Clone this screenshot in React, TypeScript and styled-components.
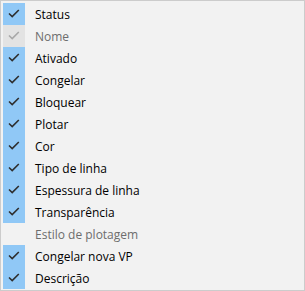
import React from 'react';
import styled, { createGlobalStyle } from 'styled-components';

type Item = { label: string; checked: boolean; disabled?: boolean };

const items: Item[] = [
  { label: 'Status', checked: true },
  { label: 'Nome', checked: true, disabled: true },
  { label: 'Ativado', checked: true },
  { label: 'Congelar', checked: true },
  { label: 'Bloquear', checked: true },
  { label: 'Plotar', checked: true },
  { label: 'Cor', checked: true },
  { label: 'Tipo de linha', checked: true },
  { label: 'Espessura de linha', checked: true },
  { label: 'Transparência', checked: true },
  { label: 'Estilo de plotagem', checked: false, disabled: true },
  { label: 'Congelar nova VP', checked: true },
  { label: 'Descrição', checked: true },
];

const GlobalStyle = createGlobalStyle`
  html, body {
    margin: 0;
    padding: 0;
    background: #f0f0f0;
  }
`;

const Check: React.FC<{ color: string }> = ({ color }) => (
  <svg width="12" height="10" viewBox="0 0 12 10">
    <path d="M1 4.5 L4.2 7.6 L10.8 1" fill="none" stroke={color} strokeWidth="1.6" />
  </svg>
);

const App: React.FC = () => {
  return (
    <>
      <GlobalStyle />
      <Menu>
        {items.map((item, i) => (
          <MenuItem key={i}>
            <CheckBox $checked={item.checked} $disabled={item.disabled}>
              {item.checked && <Check color={item.disabled ? '#a8a8a8' : '#2e2e2e'} />}
            </CheckBox>
            <Label $disabled={item.disabled}>{item.label}</Label>
          </MenuItem>
        ))}
      </Menu>
    </>
  );
};

export default App;

const Menu = styled.div`
  width: 305px;
  height: 291px;
  box-sizing: border-box;
  background: #f2f2f2;
  border: 1px solid #cccccc;
  padding: 2px 2px 2px 2px;
  display: flex;
  flex-direction: column;
`;

const MenuItem = styled.div`
  height: 22px;
  display: flex;
  align-items: center;
`;

const CheckBox = styled.div<{ $checked: boolean; $disabled?: boolean }>`
  width: 22px;
  height: 22px;
  display: flex;
  align-items: center;
  justify-content: center;
  background: ${(p) => (!p.$checked ? 'transparent' : p.$disabled ? '#e3e3e3' : '#90c8f6')};
`;

const Label = styled.span<{ $disabled?: boolean }>`
  margin-left: 10px;
  font-family: 'Open Sans', 'Noto Sans', sans-serif;
  font-size: 12px;
  color: ${(p) => (p.$disabled ? '#6d6d6d' : '#000000')};
`;
